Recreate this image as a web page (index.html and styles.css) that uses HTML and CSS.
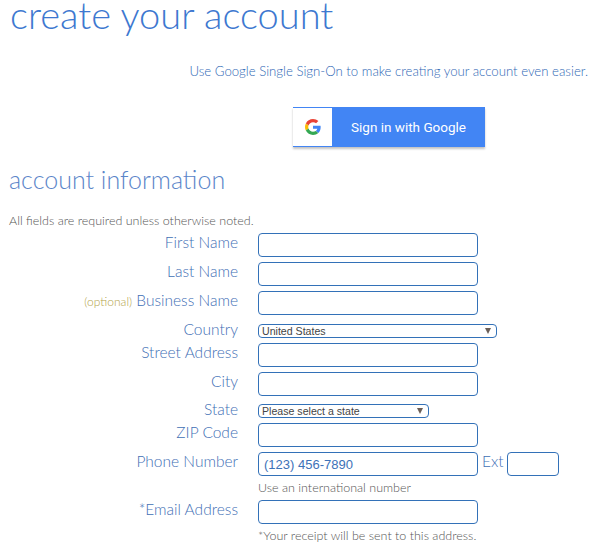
FILE: index.html
```html
<!DOCTYPE html>
<html lang="en">
<head>
  <meta charset="UTF-8">
  <title>Create your account</title>
  <meta name="viewport" content="width=device-width, initial-scale=1.0">
  <link rel="stylesheet" href="styles.css">
</head>
<body>

  <h1 class="page-title">create your account</h1>

  <p class="sso-text">Use Google Single Sign-On to make creating your account even easier.</p>

  <div class="sso-row">
    <button class="google-btn" type="button">
      <span class="google-icon">
        <svg width="16" height="16" viewBox="0 0 48 48">
          <path fill="#EA4335" d="M24 9.5c3.54 0 6.71 1.22 9.21 3.6l6.85-6.85C35.9 2.38 30.47 0 24 0 14.62 0 6.51 5.38 2.56 13.22l7.98 6.19C12.43 13.72 17.74 9.5 24 9.5z"/>
          <path fill="#4285F4" d="M46.98 24.55c0-1.57-.15-3.09-.38-4.55H24v9.02h12.94c-.58 2.96-2.26 5.48-4.78 7.18l7.73 6c4.51-4.18 7.09-10.36 7.09-17.65z"/>
          <path fill="#FBBC05" d="M10.53 28.59c-.48-1.45-.76-2.99-.76-4.59s.27-3.14.76-4.59l-7.98-6.19C.92 16.46 0 20.12 0 24c0 3.88.92 7.54 2.56 10.78l7.97-6.19z"/>
          <path fill="#34A853" d="M24 48c6.48 0 11.93-2.13 15.89-5.81l-7.73-6c-2.15 1.45-4.92 2.3-8.16 2.3-6.26 0-11.57-4.22-13.47-9.91l-7.98 6.19C6.51 42.62 14.62 48 24 48z"/>
        </svg>
      </span>
      <span class="google-label">Sign in with Google</span>
    </button>
  </div>

  <h2 class="section-title">account information</h2>
  <p class="required-note">All fields are required unless otherwise noted.</p>

  <form class="account-form">
    <label class="field-label">First Name</label>
    <div class="field"><input class="text-input" type="text"></div>

    <label class="field-label">Last Name</label>
    <div class="field"><input class="text-input" type="text"></div>

    <label class="field-label"><span class="optional">(optional)</span> Business Name</label>
    <div class="field"><input class="text-input" type="text"></div>

    <label class="field-label label-select">Country</label>
    <div class="field field-country">
      <div class="select-wrap country-select">
        <select><option>United States</option></select>
      </div>
    </div>

    <label class="field-label">Street Address</label>
    <div class="field"><input class="text-input" type="text"></div>

    <label class="field-label">City</label>
    <div class="field"><input class="text-input" type="text"></div>

    <label class="field-label label-select">State</label>
    <div class="field field-state">
      <div class="select-wrap state-select">
        <select><option>Please select a state</option></select>
      </div>
    </div>

    <label class="field-label">ZIP Code</label>
    <div class="field"><input class="text-input" type="text"></div>

    <label class="field-label">Phone Number</label>
    <div class="field">
      <div class="phone-row">
        <input class="text-input" type="text" value="(123) 456-7890">
        <span class="ext-label">Ext</span>
        <input class="text-input ext-input" type="text">
      </div>
      <div class="help-text">Use an international number</div>
    </div>

    <label class="field-label">*Email Address</label>
    <div class="field">
      <input class="text-input" type="text">
      <div class="help-text">*Your receipt will be sent to this address.</div>
    </div>
  </form>

</body>
</html>
```

FILE: styles.css
```css
body {
  margin: 0;
  padding: 0 9px;
  background: #fff;
  color: #3d72b8;
  font-family: "Lato", "Open Sans", sans-serif;
  font-weight: 300;
  height: 550px;
  overflow: hidden;
}

.page-title {
  margin: 0;
  padding-left: 1px;
  font-size: 38px;
  line-height: 28px;
  font-weight: 300;
  color: #3d78d0;
}

.sso-text {
  margin: 34px 16px 0 0;
  font-size: 13.2px;
  line-height: 18px;
  font-weight: 300;
  text-align: right;
  color: #2f68b5;
}

.sso-row {
  margin: 27px 0 0 284px;
}

.google-btn {
  display: flex;
  align-items: stretch;
  width: 192px;
  height: 40px;
  padding: 1px 0;
  border: none;
  background: #4285f4;
  box-shadow: 0 2px 2px rgba(0, 0, 0, 0.24);
  cursor: pointer;
}

.google-icon {
  display: flex;
  align-items: center;
  justify-content: center;
  width: 39px;
  background: #fff;
}

.google-label {
  flex: 1;
  align-self: center;
  color: #fff;
  font-family: "Roboto", sans-serif;
  font-size: 13.5px;
  font-weight: 400;
  text-align: left;
  padding-left: 19px;
}

.section-title {
  margin: 16px 0 0;
  font-size: 25px;
  line-height: 32px;
  font-weight: 300;
  color: #5b85c9;
}

.required-note {
  margin: 19px 0 0;
  font-size: 12.5px;
  line-height: 14px;
  color: #555;
}

.account-form {
  display: grid;
  grid-template-columns: 229px 1fr;
  column-gap: 20px;
  row-gap: 5px;
  margin-top: 5px;
}

.field-label {
  text-align: right;
  font-size: 15.5px;
  line-height: 19px;
  color: #3f6fb5;
}

.label-select {
  align-self: end;
  line-height: 17px;
}

.optional {
  font-size: 12px;
  color: #b3a34a;
}

.field-country {
  padding-top: 4px;
}

.field-state {
  padding-top: 3px;
}

.text-input {
  display: block;
  box-sizing: border-box;
  width: 220px;
  height: 24px;
  padding: 0 5px;
  border: 1px solid #3371b8;
  border-radius: 4px;
  background: #fff;
  color: #3d72b8;
  font-family: "Liberation Sans", sans-serif;
  font-size: 13px;
}

.select-wrap {
  position: relative;
  height: 14px;
}

.select-wrap::after {
  content: "";
  position: absolute;
  top: 4px;
  right: 6px;
  border-left: 3.5px solid transparent;
  border-right: 3.5px solid transparent;
  border-top: 6px solid #6b5f58;
}

.select-wrap select {
  appearance: none;
  display: block;
  box-sizing: border-box;
  width: 100%;
  height: 14px;
  padding: 0 3px;
  border: 1px solid #3371b8;
  border-radius: 4px;
  background: #fff;
  color: #444;
  font-family: "Liberation Sans", sans-serif;
  font-size: 10.6px;
  line-height: 12px;
}

.country-select {
  width: 239px;
}

.state-select {
  width: 171px;
}

.phone-row {
  display: flex;
  align-items: flex-start;
}

.ext-label {
  width: 29px;
  padding-left: 4px;
  box-sizing: border-box;
  font-size: 15.5px;
  line-height: 19px;
  color: #3f6fb5;
}

.ext-input {
  width: 52px;
}

.help-text {
  margin-top: 5px;
  font-size: 12.5px;
  line-height: 14px;
  color: #555;
}
```
